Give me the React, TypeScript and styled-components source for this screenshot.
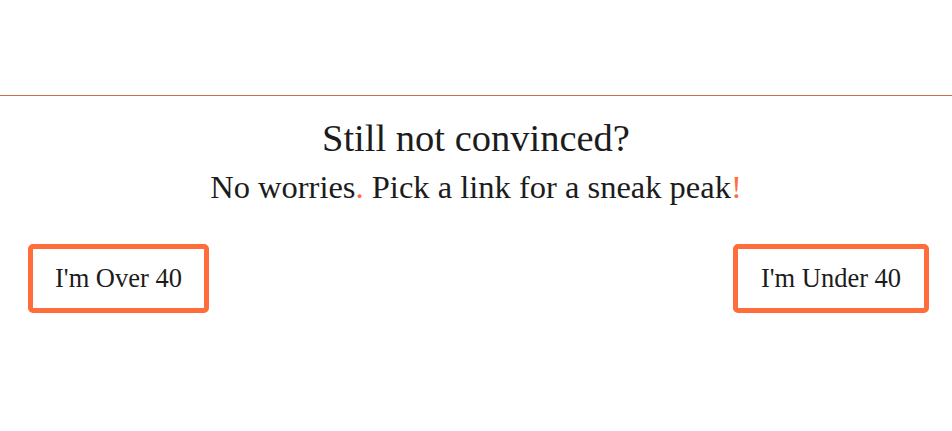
import React from "react"
import styled, { createGlobalStyle } from "styled-components"

const GlobalStyle = createGlobalStyle`
  body {
    margin: 0;
    background: #fff;
    font-family: "Liberation Serif", "DejaVu Serif", serif;
    color: #1c1c1c;
  }
`

const Page = styled.div`
  width: 952px;
  height: 431px;
  padding-top: 95px;
  box-sizing: border-box;
`

const Rule = styled.hr`
  margin: 0;
  border: none;
  border-top: 1px solid #c8704e;
`

const Pitch = styled.section`
  text-align: center;
  padding-top: 17px;
`

const Title = styled.h2`
  margin: 0;
  font-size: 38.5px;
  font-weight: 400;
  line-height: 50px;
`

const Sub = styled.p`
  margin: 0;
  padding-top: 3px;
  font-size: 32.5px;
  line-height: 42px;
`

const Accent = styled.span`
  color: #ff6d3b;
`

const Links = styled.div`
  display: flex;
  justify-content: space-between;
  padding: 36px 23px 0 28px;
`

const LinkButton = styled.a`
  display: flex;
  align-items: center;
  justify-content: center;
  box-sizing: border-box;
  width: ${(p: { $w: number }) => p.$w}px;
  height: 69px;
  border: 5px solid #ff6d3b;
  border-radius: 5px;
  font-size: 26.5px;
  color: #1c1c1c;
  text-decoration: none;
`

export default function App() {
  return (
    <>
      <GlobalStyle />
      <Page>
        <Rule />
        <Pitch>
          <Title>Still not convinced?</Title>
          <Sub>
            No worries<Accent>.</Accent> Pick a link for a sneak peak<Accent>!</Accent>
          </Sub>
        </Pitch>
        <Links>
          <LinkButton $w={181} href="#over">I'm Over 40</LinkButton>
          <LinkButton $w={196} href="#under">I'm Under 40</LinkButton>
        </Links>
      </Page>
    </>
  )
}
